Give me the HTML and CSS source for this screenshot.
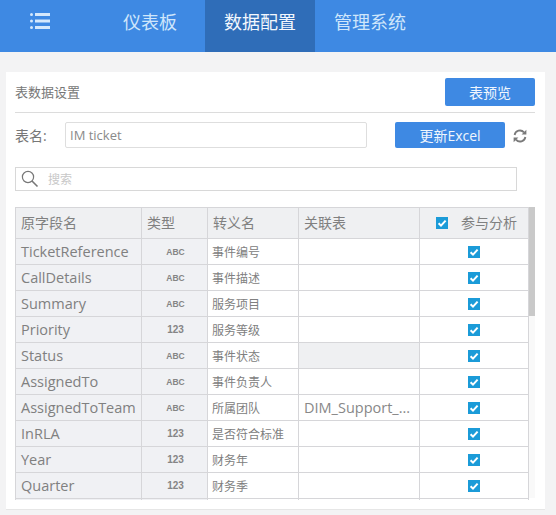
FILE: index.html
```html
<!DOCTYPE html>
<html lang="zh">
<head>
<meta charset="utf-8">
<title>数据配置</title>
<link rel="stylesheet" href="styles.css">
</head>
<body>
<svg width="0" height="0" class="defs"><defs>
<symbol id="chk" viewBox="0 0 12 12"><rect width="12" height="12" fill="#1b9bd8"/><path d="M2.6 6.2 5 8.6 9.6 3.6" fill="none" stroke="#fff" stroke-width="2"/></symbol>
</defs></svg>
<header class="topbar">
  <div class="menu-icon">
    <svg width="20" height="18" viewBox="0 0 20 18"><g fill="#d4e8fc"><rect x="0" y="1" width="3" height="3" rx="1.5"/><rect x="0" y="7.5" width="3" height="3" rx="1.5"/><rect x="0" y="14" width="3" height="3" rx="1.5"/><rect x="5" y="1" width="15" height="3"/><rect x="5" y="7.5" width="15" height="3"/><rect x="5" y="14" width="15" height="3"/></g></svg>
  </div>
  <nav class="tabs">
    <a class="tab tab-first">仪表板</a>
    <a class="tab active">数据配置</a>
    <a class="tab">管理系统</a>
  </nav>
</header>
<main class="card">
  <div class="title-row">
    <span class="title">表数据设置</span>
    <button class="btn btn-preview">表预览</button>
  </div>
  <div class="name-row">
    <label class="name-label">表名:</label>
    <input class="name-input" value="IM ticket">
    <button class="btn btn-update">更新Excel</button>
    <svg class="refresh" width="14" height="14" viewBox="0 0 14 14"><g fill="none" stroke="#7a7a7a" stroke-width="1.8"><path d="M1.6 6A5.4 5.4 0 0 1 11 3.4"/><path d="M12.4 8A5.4 5.4 0 0 1 3 10.6"/></g><path d="M13.4 0.8V5.6H8.6Z" fill="#7a7a7a"/><path d="M.6 13.2V8.4H5.4Z" fill="#7a7a7a"/></svg>
  </div>
  <div class="search">
    <svg width="18" height="18" viewBox="0 0 18 18"><circle cx="7" cy="7" r="5.6" fill="none" stroke="#777" stroke-width="1.2"/><path d="M11 11 16.5 16.5" stroke="#777" stroke-width="1.6"/></svg>
    <input class="search-input" placeholder="搜索">
  </div>
  <div class="table-wrap">
    <table class="grid">
      <colgroup><col class="c1"><col class="c2"><col class="c3"><col class="c4"><col class="c5"></colgroup>
      <thead>
        <tr><th><span class="th-text">原字段名</span></th><th><span class="th-text">类型</span></th><th><span class="th-text">转义名</span></th><th><span class="th-text">关联表</span></th><th class="th-check"><svg class="cb cb-head" width="12" height="12"><use href="#chk"/></svg><span class="th-text">参与分析</span></th></tr>
      </thead>
      <tbody>
        <tr><td class="f">TicketReference</td><td class="t">ABC</td><td class="z">事件编号</td><td></td><td class="k"><svg class="cb" width="12" height="12"><use href="#chk"/></svg></td></tr>
        <tr><td class="f">CallDetails</td><td class="t">ABC</td><td class="z">事件描述</td><td></td><td class="k"><svg class="cb" width="12" height="12"><use href="#chk"/></svg></td></tr>
        <tr><td class="f">Summary</td><td class="t">ABC</td><td class="z">服务项目</td><td></td><td class="k"><svg class="cb" width="12" height="12"><use href="#chk"/></svg></td></tr>
        <tr><td class="f">Priority</td><td class="t n">123</td><td class="z">服务等级</td><td></td><td class="k"><svg class="cb" width="12" height="12"><use href="#chk"/></svg></td></tr>
        <tr><td class="f">Status</td><td class="t">ABC</td><td class="z">事件状态</td><td class="off"></td><td class="k"><svg class="cb" width="12" height="12"><use href="#chk"/></svg></td></tr>
        <tr><td class="f">AssignedTo</td><td class="t">ABC</td><td class="z">事件负责人</td><td></td><td class="k"><svg class="cb" width="12" height="12"><use href="#chk"/></svg></td></tr>
        <tr><td class="f">AssignedToTeam</td><td class="t">ABC</td><td class="z">所属团队</td><td class="rel">DIM_Support_...</td><td class="k"><svg class="cb" width="12" height="12"><use href="#chk"/></svg></td></tr>
        <tr><td class="f">InRLA</td><td class="t n">123</td><td class="z">是否符合标准</td><td></td><td class="k"><svg class="cb" width="12" height="12"><use href="#chk"/></svg></td></tr>
        <tr><td class="f">Year</td><td class="t n">123</td><td class="z">财务年</td><td></td><td class="k"><svg class="cb" width="12" height="12"><use href="#chk"/></svg></td></tr>
        <tr><td class="f">Quarter</td><td class="t n">123</td><td class="z">财务季</td><td></td><td class="k"><svg class="cb" width="12" height="12"><use href="#chk"/></svg></td></tr>
        <tr><td class="f"></td><td class="t"></td><td></td><td></td><td></td></tr>
      </tbody>
    </table>
    <div class="scrollbar"><div class="thumb"></div></div>
  </div>
</main>
</body>
</html>
```
FILE: styles.css
```css
* { box-sizing: border-box; }
html, body { margin: 0; height: 515px; overflow: hidden; }
body {
  background: #f3f3f4;
  font-family: "Open Sans", "Noto Sans CJK SC", sans-serif;
  color: #777;
}
.defs { position: absolute; }
.topbar { height: 52px; background: #3e89e3; display: flex; }
.menu-icon { width: 104px; padding: 12px 0 0 30px; }
.tabs { display: flex; }
.tab {
  height: 52px;
  padding: 0 19px;
  font-size: 18px;
  line-height: 44px;
  color: #cfe6fb;
}
.tab-first { margin-right: 9px; }
.tab.active { background: #2f6db8; color: #f2f7fd; }

.card {
  margin: 20px 11px 0 6px;
  height: 438px;
  background: #fff;
  padding: 0 10px 0 9px;
  border-bottom: 1px solid #e6e6e6;
}
.title-row {
  height: 41px;
  padding-top: 6px;
  display: flex;
  justify-content: space-between;
  border-bottom: 1px solid #dcdcdc;
}
.title { font-size: 13px; line-height: 28px; color: #777; }
.btn {
  border: 0;
  border-radius: 2px;
  background: #3e89e3;
  color: #f0f6fd;
  font-family: inherit;
  font-size: 14px;
  padding: 0;
}
.btn-preview { width: 90px; height: 28px; }
.name-row { display: flex; align-items: center; height: 26px; margin-top: 9px; }
.name-label { width: 50px; font-size: 14px; color: #777; }
.name-input {
  width: 302px;
  height: 26px;
  border: 1px solid #dedede;
  border-radius: 2px;
  padding: 0 4px;
  font-family: inherit;
  font-size: 13px;
  color: #8a8a8a;
  outline: 0;
}
.btn-update { width: 110px; height: 26px; margin-left: 28px; }
.refresh { margin-left: 8px; margin-top: 1px; }
.search {
  width: 502px;
  height: 24px;
  margin-top: 19px;
  border: 1px solid #d8d8d8;
  display: flex;
  align-items: center;
  padding-left: 5px;
}
.search-input {
  border: 0;
  outline: 0;
  margin-left: 9px;
  padding: 0;
  font-family: inherit;
  font-size: 12px;
  width: 200px;
}
.search-input::placeholder { color: #c8c8c8; }
.table-wrap {
  margin-top: 16px;
  width: 520px;
  height: 293px;
  overflow: hidden;
  display: flex;
}
.grid {
  table-layout: fixed;
  width: 513px;
  border-collapse: collapse;
  border-top: 1px solid #d8d8da;
  align-self: flex-start;
  flex: none;
}
.c1 { width: 126px; }
.c2 { width: 66px; }
.c3 { width: 91px; }
.c4 { width: 121px; }
.c5 { width: 109px; }
th, td {
  border: 1px solid #d6d6d9;
  padding: 0 0 0 5px;
  height: 26px;
  overflow: hidden;
  white-space: nowrap;
}
th {
  height: 31px;
  padding-bottom: 2px;
  background: #eff0f2;
  font-size: 14px;
  font-weight: 400;
  text-align: left;
  color: #808080;
}
.th-text { vertical-align: middle; }
tbody tr { height: 26px; }
.f { background: #f0f1f4; font-size: 14.5px; color: #808080; }
.t {
  background: #f0f1f4;
  padding: 0 0 0 2px;
  text-align: center;
  font-family: "Liberation Sans", sans-serif;
  font-size: 8.5px;
  font-weight: 700;
  color: #858585;
}
.t.n { font-size: 10px; }
.z { font-size: 12px; color: #808080; padding-left: 4px; }
.rel { font-size: 14.5px; color: #888; }
.off { background: #eff0f2; }
.k { padding: 0; text-align: center; }
.cb { display: block; margin: 0 auto; }
.th-check { padding-left: 16px; }
.cb-head { display: inline-block; margin: 0 13px 0 0; vertical-align: middle; }
.scrollbar {
  width: 7px;
  height: 291px;
  background: #f9f9f9;
  flex: none;
}
.thumb { width: 7px; height: 109px; background: #c9c9c9; }
```
